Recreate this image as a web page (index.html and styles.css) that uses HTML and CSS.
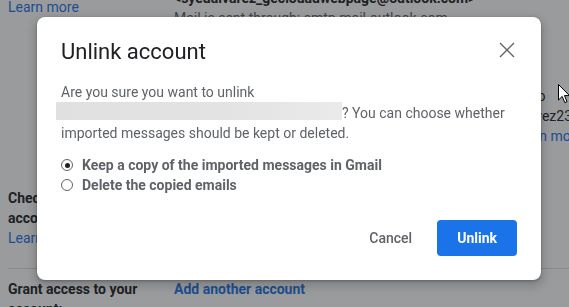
FILE: index.html
```html
<!DOCTYPE html>
<html lang="en">
<head>
    <meta charset="UTF-8">
    <meta name="viewport" content="width=device-width, initial-scale=1.0">
    <title>Settings | Accounts and Import</title>
    <link rel="stylesheet" href="styles.css">
</head>
<body>

    <!-- Settings page behind the dialog -->
    <div class="page">
        <div class="row first">
            <div class="label label-top">
                <a href="#" class="link">Learn more</a>
            </div>
            <div class="content">
                <div class="entry entry-first">
                    <div class="entry-main">
                        <div class="strong">&lt;syedalvarez_geclouadwebpage@outlook.com&gt;</div>
                        <div class="muted">Mail is sent through: smtp.mail.outlook.com</div>
                        <div class="muted">Secured connection on port 587 using TLS</div>
                        <div class="muted">Treat as an alias</div>
                    </div>
                </div>
                <div class="entry">
                    <div class="entry-main">
                        <div class="strong">Syed Alvarez</div>
                        <div class="muted">alvarez23@gmail.com</div>
                    </div>
                    <div class="entry-actions">
                        <div>Go to</div>
                        <div>alvarez23@gmail.com</div>
                        <a href="#" class="link">Learn more</a>
                    </div>
                </div>
            </div>
        </div>

        <div class="row second">
            <div class="label">
                <div class="strong">Check mail from other accounts:</div>
                <a href="#" class="link">Learn more</a>
            </div>
            <div class="content">
                <div class="strong">syedalvarez_geclouadwebpage@outlook.com (POP3)</div>
            </div>
        </div>

        <div class="row">
            <div class="label">
                <div class="strong">Grant access to your account:</div>
            </div>
            <div class="content">
                <a href="#" class="link strong">Add another account</a>
            </div>
        </div>
    </div>

    <!-- Modal -->
    <div class="overlay"></div>

    <div class="dialog">
        <div class="dialog-head">
            <h2>Unlink account</h2>
            <button class="close" aria-label="Close">
                <svg width="16" height="16" viewBox="0 0 16 16">
                    <path d="M1 1 L15 15 M15 1 L1 15" stroke="#5f6368" stroke-width="1.4" fill="none"/>
                </svg>
            </button>
        </div>

        <p class="dialog-text">Are you sure you want to unlink <span class="redacted"></span>? You can choose whether imported messages should be kept or deleted.</p>

        <div class="options">
            <label class="option"><span class="radio checked"></span>Keep a copy of the imported messages in Gmail</label>
            <label class="option"><span class="radio"></span>Delete the copied emails</label>
        </div>

        <div class="dialog-actions">
            <button class="btn-text">Cancel</button>
            <button class="btn-primary">Unlink</button>
        </div>
    </div>

    <!-- Mouse pointer -->
    <svg class="pointer" width="13" height="20" viewBox="0 0 13 20">
        <path d="M0.5 0.5 L0.5 16 L4.2 12.4 L6.8 18.6 L9 17.7 L6.5 11.6 L11.5 11.6 Z" fill="#fff" stroke="#000" stroke-width="1"/>
    </svg>

</body>
</html>
```

FILE: styles.css
```css
body {
    font-family: Roboto, "Liberation Sans", sans-serif;
    font-size: 14px;
    line-height: 20px;
    color: #202124;
    background-color: #fff;
    margin: 0;
    overflow: hidden;
}

a {
    text-decoration: none;
}

.link {
    color: #1a73e8;
}

.strong {
    font-weight: bold;
}

.muted {
    color: #5f6368;
}

/* Settings page */
.page {
    margin-top: -12px;
    padding-left: 8px;
}

.row {
    display: grid;
    grid-template-columns: 166px 1fr;
    border-top: 1px solid #dadce0;
    padding: 21px 0 20px;
}

.row.first {
    border-top: none;
    padding-top: 0;
}

.row.second {
    border-top: none;
    padding-top: 22px;
}

.row:last-child {
    padding-top: 10px;
}

.label-top {
    padding-top: 9px;
}

.content {
    white-space: nowrap;
}

.entry {
    display: grid;
    grid-template-columns: 338px auto;
}

.entry-first {
    margin-bottom: 18px;
}

/* Overlay */
.overlay {
    position: fixed;
    top: 0;
    left: 0;
    right: 0;
    bottom: 0;
    background: rgba(32, 33, 36, 0.45);
}

/* Dialog */
.dialog {
    position: fixed;
    top: 17px;
    left: 37px;
    width: 456px;
    padding: 21px 24px 24px;
    background: #fff;
    border-radius: 8px;
    box-shadow: 0 1px 3px rgba(0, 0, 0, 0.3), 0 4px 8px 3px rgba(0, 0, 0, 0.15);
}

.dialog-head {
    display: flex;
    justify-content: space-between;
    align-items: flex-start;
}

.dialog-head h2 {
    margin: 0;
    font-size: 22px;
    font-weight: normal;
    line-height: 28px;
    color: #202124;
}

.close {
    border: none;
    background: none;
    padding: 0;
    margin: 4px 2px 0 0;
    width: 16px;
    height: 16px;
    cursor: pointer;
}

.close svg {
    display: block;
}

.dialog-text {
    margin: 16px 0 0;
    color: #5f6368;
}

.redacted {
    display: inline-block;
    width: 286px;
    height: 18px;
    margin-left: -5px;
    vertical-align: -2px;
    background: linear-gradient(90deg, #e0e0e0, #e3e3e3 60%, #eaeaea);
}

.options {
    margin-top: 12px;
}

.option {
    display: flex;
    align-items: center;
    font-weight: bold;
    color: #5f6368;
}

.radio {
    box-sizing: border-box;
    width: 12px;
    height: 12px;
    border: 1.3px solid #5f6368;
    border-radius: 50%;
    margin-right: 9px;
    display: flex;
    align-items: center;
    justify-content: center;
}

.radio.checked::after {
    content: "";
    width: 5px;
    height: 5px;
    border-radius: 50%;
    background: #202124;
}

.dialog-actions {
    display: flex;
    justify-content: flex-end;
    margin-top: 25px;
}

.dialog-actions button {
    font-family: Roboto, "Liberation Sans", sans-serif;
    font-size: 14px;
    height: 36px;
    border: none;
    border-radius: 4px;
    cursor: pointer;
}

.btn-text {
    background: none;
    color: #5f6368;
    font-weight: 500;
    padding: 0 25px 0 24px;
}

.btn-primary {
    background: #1a73e8;
    color: #fff;
    font-weight: bold;
    padding: 0 20px;
}

/* Mouse pointer */
.pointer {
    position: fixed;
    left: 558px;
    top: 84px;
}
```
